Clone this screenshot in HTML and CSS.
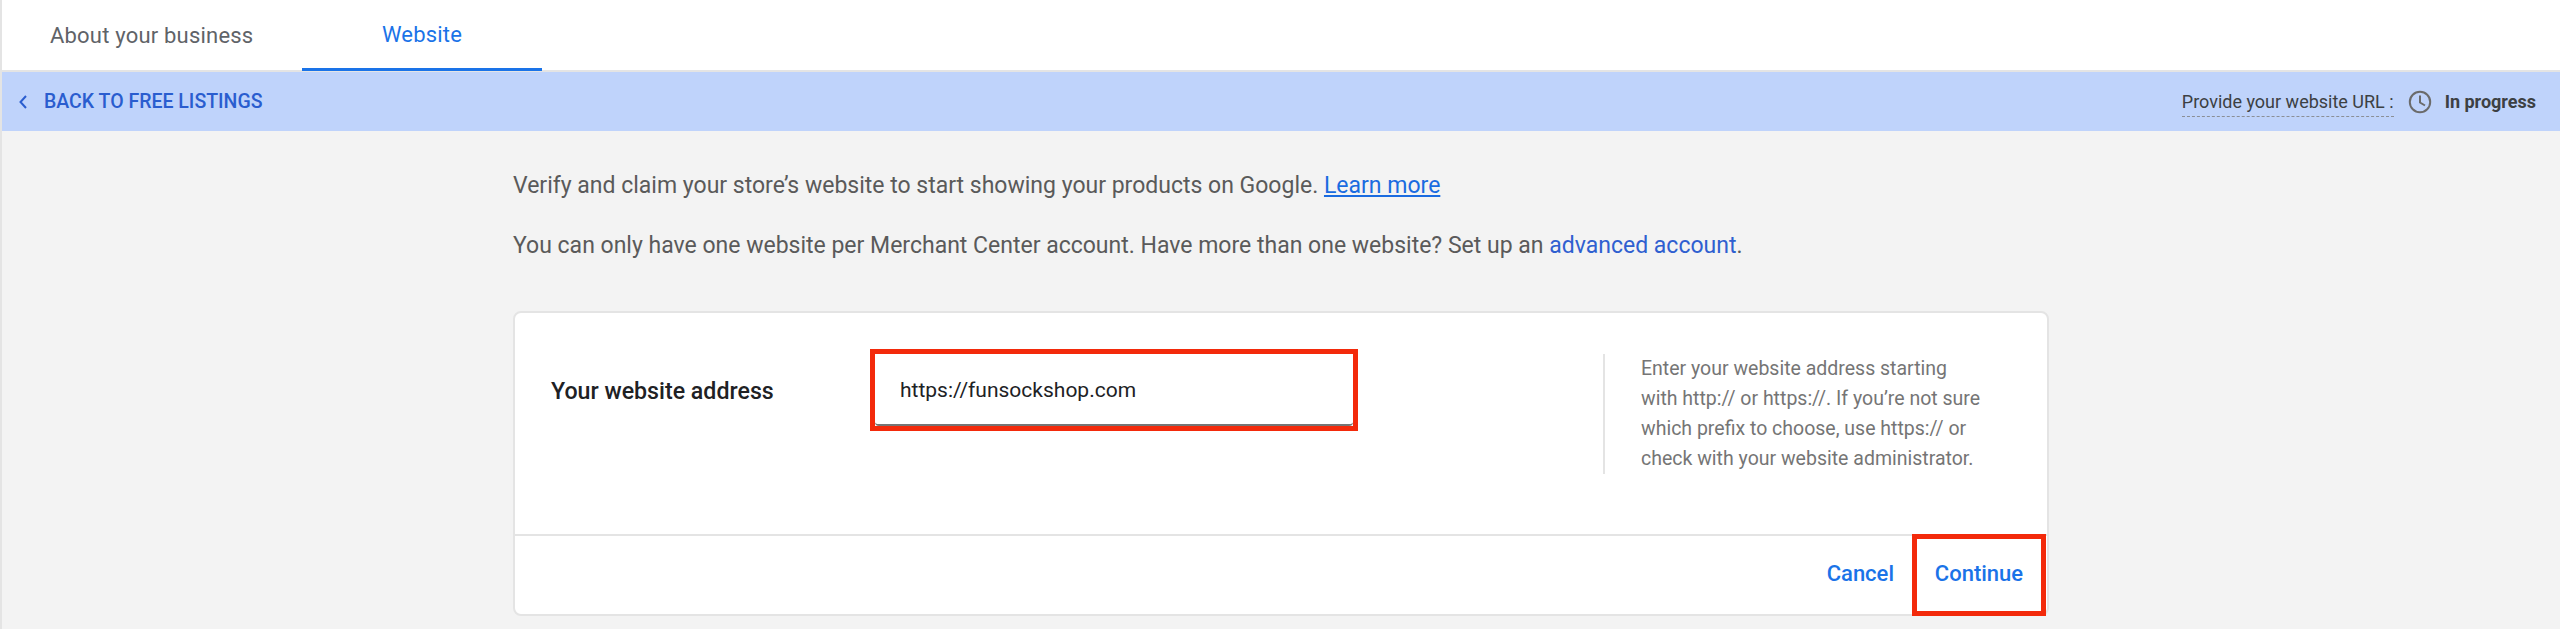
FILE: index.html
```html
<!DOCTYPE html>
<html lang="en">
<head>
  <meta charset="UTF-8">
  <meta name="viewport" content="width=device-width, initial-scale=1.0">
  <title>Website - Merchant Center</title>
  <link rel="stylesheet" href="styles.css">
</head>
<body>
  <div class="page">
    <!-- Tabs -->
    <nav class="tabs">
      <a class="tab tab-first">About your business</a>
      <a class="tab tab-active">Website</a>
    </nav>

    <!-- Back bar -->
    <div class="banner">
      <a class="back">
        <svg class="back-icon" viewBox="0 0 10 16" width="10" height="16"><path d="M8 2 2.5 8 8 14" fill="none" stroke="currentColor" stroke-width="2"/></svg>
        BACK TO FREE LISTINGS
      </a>
      <div class="status">
        <span class="status-label">Provide your website URL :</span>
        <svg class="status-icon" viewBox="0 0 24 24" width="24" height="24"><circle cx="12" cy="12" r="10.2" fill="none" stroke="currentColor" stroke-width="2"/><path d="M12 5.5V12.5L17 15.5" fill="none" stroke="currentColor" stroke-width="2"/></svg>
        <span class="status-value">In progress</span>
      </div>
    </div>

    <main class="content">
      <p class="intro">Verify and claim your store’s website to start showing your products on Google. <a class="learn">Learn more</a></p>
      <p class="intro">You can only have one website per Merchant Center account. Have more than one website? Set up an <a class="adv">advanced account</a>.</p>

      <section class="card">
        <div class="card-body">
          <div class="field">
            <label class="field-label" for="url">Your website address</label>
            <div class="field-mark">
              <input class="field-input" id="url" type="text" value="https://funsockshop.com">
            </div>
          </div>
          <p class="help">Enter your website address starting<br>with http:// or https://. If you’re not sure<br>which prefix to choose, use https:// or<br>check with your website administrator.</p>
        </div>
        <div class="card-foot">
          <button class="btn btn-cancel">Cancel</button>
          <button class="btn btn-marked">Continue</button>
        </div>
      </section>
    </main>
  </div>
</body>
</html>
```

FILE: styles.css
```css
/* General */
html, body {
  margin: 0;
  height: 100%;
}
body {
  font-family: Roboto, 'Liberation Sans', sans-serif;
  background: #f3f3f3;
  color: #3c4043;
  overflow: hidden;
}
.page {
  min-height: 629px;
  border-left: 2px solid #e4e4e4;
}
/* Tabs */
.tabs {
  display: flex;
  height: 70px;
  background: #fff;
  border-bottom: 2px solid #e4e4e4;
}
.tab {
  display: flex;
  align-items: center;
  box-sizing: border-box;
  height: 70px;
  font-size: 22px;
  letter-spacing: 0.2px;
  color: #5f6368;
}
.tab-first {
  padding-left: 48px;
  width: 300px;
}
.tab-active {
  justify-content: center;
  width: 240px;
  height: 71px;
  color: #1a73e8;
  border-bottom: 3px solid #1a73e8;
}
/* Banner */
.banner {
  display: flex;
  align-items: center;
  justify-content: space-between;
  height: 59px;
  padding: 0 24px 0 16px;
  background: #bfd3fb;
}
.back {
  display: flex;
  align-items: center;
  gap: 16px;
  font-size: 19.5px;
  font-weight: 500;
  color: #2a5dcf;
}
.status {
  display: flex;
  align-items: center;
  font-size: 18px;
  color: #3c4043;
}
.status-label {
  padding: 4px 0;
  border-bottom: 1px dashed #8b8f96;
}
.status-icon {
  margin: 0 13px 0 14px;
  color: #6b6b6b;
}
.status-value {
  font-weight: 700;
}
/* Content */
.content {
  padding: 43px 0 0 511px;
  width: 1536px;
}
.intro {
  margin: 0 0 36px;
  font-size: 23px;
  line-height: 24px;
  color: #5a5a5a;
}
.learn {
  color: #1a6be0;
  text-decoration: underline;
}
.adv {
  color: #2f5fd0;
}
/* Card */
.card {
  box-sizing: border-box;
  margin-top: 53px;
  height: 305px;
  background: #fff;
  border: 2px solid #e4e4e4;
  border-radius: 8px;
}
.card-body {
  display: flex;
  align-items: flex-start;
  box-sizing: border-box;
  height: 223px;
  padding-top: 36px;
  border-bottom: 2px solid #e4e4e4;
}
.field {
  display: flex;
  align-items: center;
}
.field-label {
  width: 355px;
  padding: 2px 0 0 36px;
  box-sizing: border-box;
  font-size: 23.2px;
  font-weight: 500;
  color: #202124;
}
.field-mark {
  box-sizing: border-box;
  width: 488px;
  height: 82px;
  border: 5px solid #f32a0b;
}
.field-input {
  display: block;
  box-sizing: border-box;
  width: 100%;
  height: 100%;
  padding: 2px 25px 0;
  border: 0;
  border-bottom: 2px solid #757575;
  border-radius: 4px;
  outline: none;
  font-family: inherit;
  font-size: 21px;
  color: #202124;
  background: #fff;
}
.help {
  margin: 5px 0 0 245px;
  padding-left: 36px;
  border-left: 2px solid #e4e4e4;
  font-size: 19.5px;
  line-height: 30px;
  color: #757575;
}
.card-foot {
  display: flex;
  justify-content: flex-end;
  align-items: flex-start;
  padding-right: 1px;
}
.btn {
  box-sizing: border-box;
  height: 82px;
  margin-top: -2px;
  padding: 0 0 4px;
  border: 0;
  background: none;
  font-family: inherit;
  font-size: 22px;
  font-weight: 500;
  color: #1a73e8;
  cursor: pointer;
}
.btn-cancel {
  margin-right: 18px;
}
.btn-marked {
  width: 134px;
  border: 5px solid #f32a0b;
}
```
